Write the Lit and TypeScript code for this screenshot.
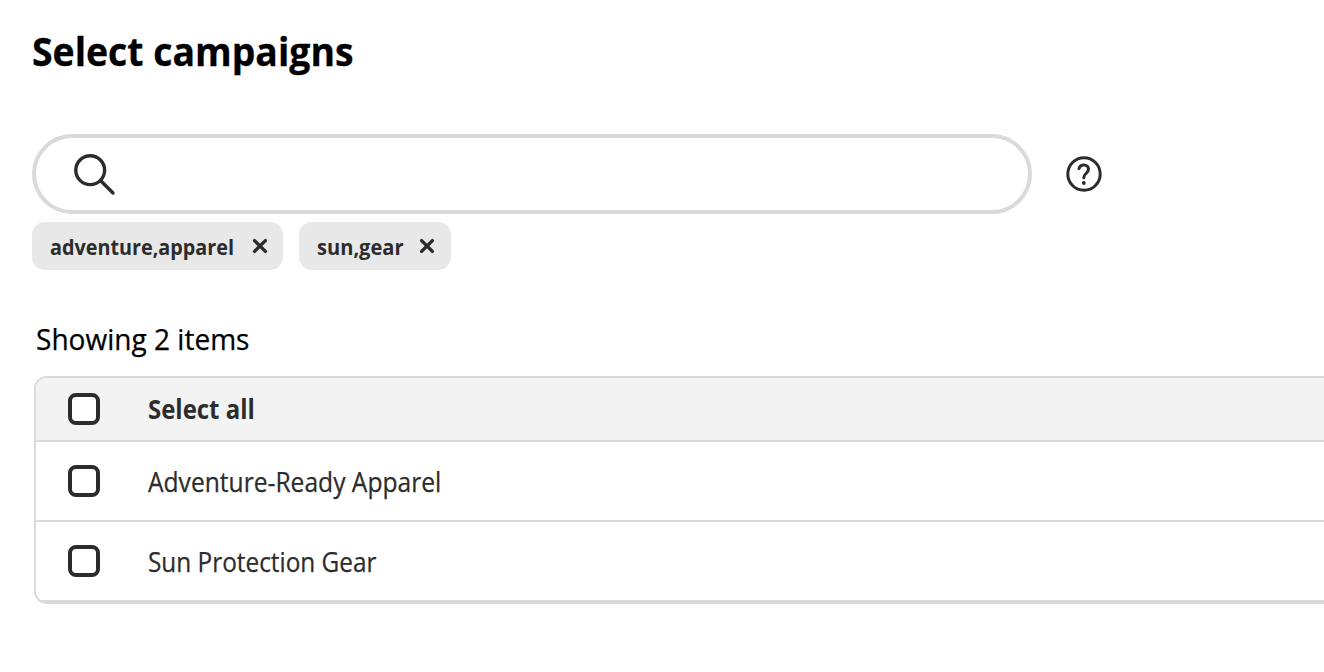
import { LitElement, html, css } from "lit";
import { customElement, state } from "lit/decorators.js";

@customElement("app-root")
class AppRoot extends LitElement {
  @state() private filters = [
    { label: "adventure,apparel", kind: "long" },
    { label: "sun,gear", kind: "short" },
  ];

  @state() private rows = [
    { label: "Adventure-Ready Apparel", kind: "adventure" },
    { label: "Sun Protection Gear", kind: "sun" },
  ];

  static styles = css`
    :host {
      display: block;
      width: 100%;
      height: 672px;
      overflow: hidden;
      background: #fff;
      color: #2c2c2c;
      font-family: "Open Sans", "Noto Sans", sans-serif;
    }
    .page { padding: 23px 0 0 32px; }
    h1, p { margin: 0; color: #000; }
    h1 { font-size: 40px; line-height: 56px; font-weight: 700; height: 56px; }
    .narrow {
      display: inline-block;
      white-space: nowrap;
      transform-origin: 0 50%;
      transform: scaleX(var(--sx, 1));
    }
    h1 .narrow { --sx: 0.934; -webkit-text-stroke: 0.3px #000; }
    .narrow.long { --sx: 0.899; }
    .narrow.short { --sx: 0.913; }
    .count .narrow { --sx: 0.935; -webkit-text-stroke: 0.25px #000; }
    .head .narrow { --sx: 0.921; }
    .narrow.adventure { --sx: 0.911; }
    .narrow.sun { --sx: 0.902; }
    .search-row { display: flex; align-items: center; gap: 34px; margin-top: 55px; }
    .search {
      box-sizing: border-box;
      width: 1000px;
      height: 80px;
      border: 4px solid #dadada;
      border-radius: 40px;
      display: flex;
      align-items: center;
      padding-left: 36px;
    }
    svg { display: block; flex: none; fill: none; stroke: #2c2c2c; }
    .tags { display: flex; gap: 16px; margin-top: 8px; }
    .tag {
      box-sizing: border-box;
      height: 48px;
      padding: 0 15px 0 18px;
      background: #e8e8e8;
      border-radius: 13px;
      display: flex;
      align-items: center;
      justify-content: space-between;
      font-size: 22px;
      line-height: 48px;
      font-weight: 700;
    }
    .tag.long { width: 251px; }
    .tag.short { width: 152px; padding-right: 16px; }
    .tag .narrow { width: 0; }
    .count { margin: 49px 0 0 4px; font-size: 30px; line-height: 40px; height: 40px; }
    .table {
      margin: 17px 0 0 2px;
      border: 2px solid #dadada;
      border-right: 0;
      border-radius: 13px 0 0 13px;
      overflow: hidden;
    }
    .row {
      box-sizing: border-box;
      height: 80px;
      border-bottom: 2px solid #dadada;
      display: flex;
      align-items: center;
      gap: 48px;
      padding-left: 32px;
      font-size: 27px;
      line-height: 36px;
    }
    .row .label { padding-top: 2px; -webkit-text-stroke: 0.25px #2c2c2c; }
    .row.head { height: 64px; background: #f3f3f3; font-size: 26px; font-weight: 700; }
    .box {
      box-sizing: border-box;
      width: 32px;
      height: 32px;
      border: 4px solid #2c2c2c;
      border-radius: 8px;
      background: #fff;
      flex: none;
    }
  `;

  render() {
    return html`
      <main class="page">
        <h1><span class="narrow">Select campaigns</span></h1>
        <div class="search-row">
          <div class="search">
            <svg width="44" height="44" viewBox="0 0 44 44" stroke-width="3.4" stroke-linecap="round">
              <circle cx="18.2" cy="18.2" r="14.4"></circle>
              <path d="M28.7 28.7 41 41"></path>
            </svg>
          </div>
          <svg width="36" height="36" viewBox="0 0 36 36" stroke-width="3" stroke-linecap="round" stroke-linejoin="round">
            <circle cx="18" cy="18" r="16.2"></circle>
            <path d="M13 12.6c.6-2.3 2.4-3.5 4.8-3.5 2.8 0 4.7 1.7 4.7 4.1 0 3.8-4.7 4.4-4.7 8.6"></path>
            <circle cx="17.8" cy="27" r="1.9" fill="#2c2c2c" stroke="none"></circle>
          </svg>
        </div>
        <div class="tags">
          ${this.filters.map((f) => html`
            <div class="tag ${f.kind}">
              <span class="narrow ${f.kind}">${f.label}</span>
              <svg width="16" height="16" viewBox="0 0 16 16" stroke-width="3.4" stroke-linecap="round">
                <path d="M2.6 2.6 13.4 13.4M13.4 2.6 2.6 13.4"></path>
              </svg>
            </div>`)}
        </div>
        <p class="count"><span class="narrow">Showing 2 items</span></p>
        <section class="table">
          <div class="row head"><span class="box"></span><span class="narrow">Select all</span></div>
          ${this.rows.map((r) => html`
            <div class="row"><span class="box"></span><span class="label narrow ${r.kind}">${r.label}</span></div>`)}
        </section>
      </main>
    `;
  }
}
